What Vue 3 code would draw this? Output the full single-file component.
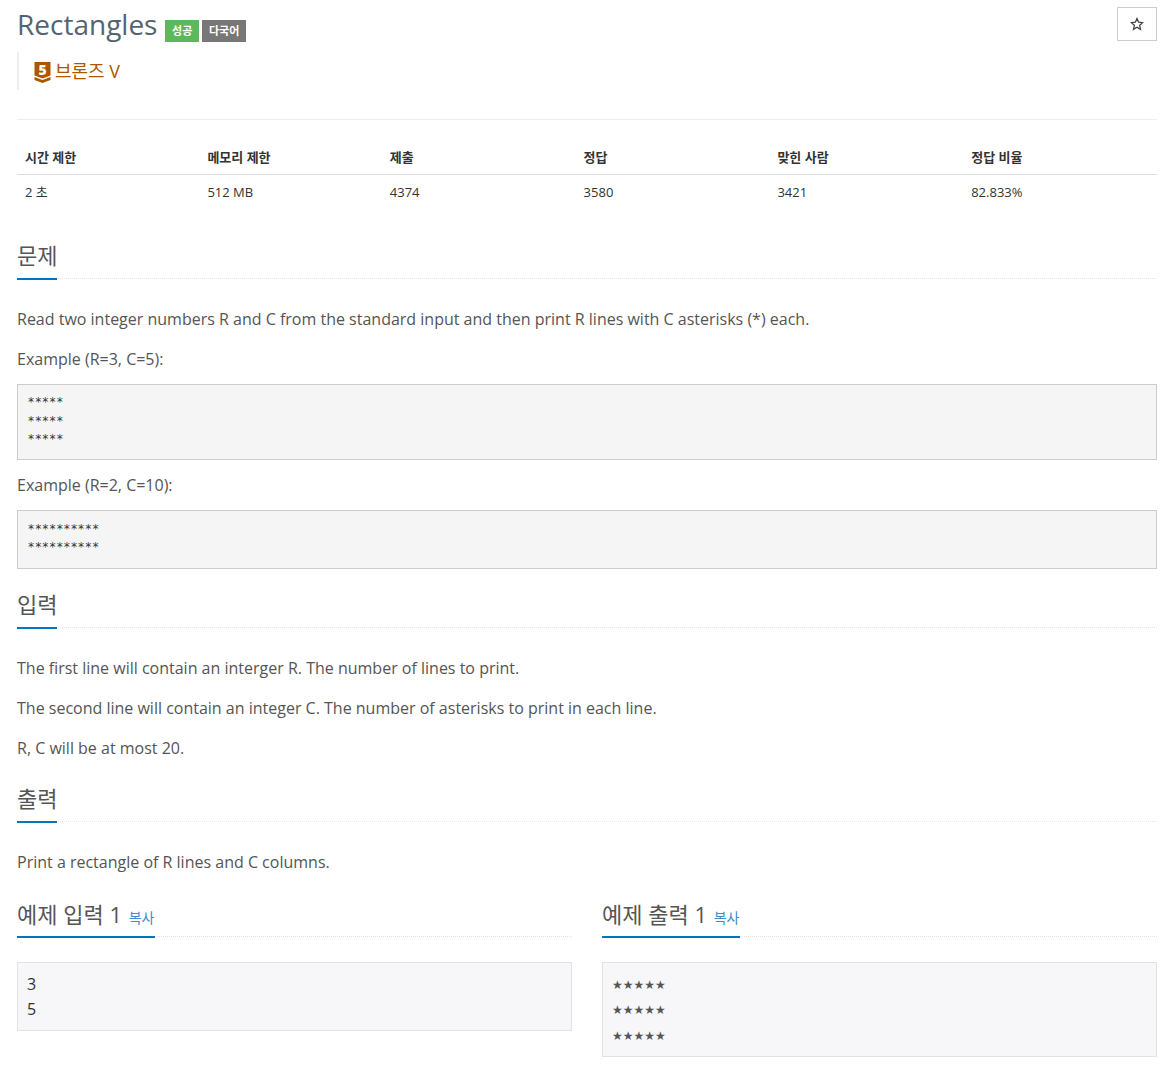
<script setup>
const stats = [
  { label: '시간 제한', value: '2 초', cls: 'narrow' },
  { label: '메모리 제한', value: '512 MB', cls: 'narrow' },
  { label: '제출', value: '4374', cls: 'wide' },
  { label: '정답', value: '3580', cls: 'wide' },
  { label: '맞힌 사람', value: '3421', cls: 'wide' },
  { label: '정답 비율', value: '82.833%', cls: 'wide' }
]
</script>

<template>
  <div class="page">
    <header class="title-row">
      <div class="title-left">
        <h1 class="title">Rectangles</h1>
        <span class="label green">성공</span>
        <span class="label gray">다국어</span>
      </div>
      <button class="star-btn" type="button" aria-label="star">
        <svg width="14" height="14" viewBox="0 0 24 24">
          <path d="M12 2.6l2.8 6.4 6.9.7-5.2 4.6 1.5 6.9-6-3.6-6 3.6 1.5-6.9-5.2-4.6 6.9-.7z" fill="none" stroke="#444" stroke-width="2.2" stroke-linejoin="miter" />
        </svg>
      </button>
    </header>

    <blockquote class="tier">
      <svg class="tier-icon" width="17" height="26" viewBox="0 -4 17 26">
        <path d="M0.5 0H16.5V13.5L8.5 16.5L0.5 13.5Z" fill="#ad5600" />
        <path d="M0.5 15L8.5 18L16.5 15V18L8.5 21L0.5 18Z" fill="#ad5600" />
        <text x="8.5" y="12.6" text-anchor="middle" class="tier-num">5</text>
      </svg>
      <span class="tier-name">브론즈 V</span>
    </blockquote>

    <div class="rule"></div>

    <table class="stats">
      <thead>
        <tr>
          <th v-for="s in stats" :key="s.label" :class="s.cls">{{ s.label }}</th>
        </tr>
      </thead>
      <tbody>
        <tr>
          <td v-for="s in stats" :key="s.label">{{ s.value }}</td>
        </tr>
      </tbody>
    </table>

    <section class="sec first">
      <div class="headline"><h2>문제</h2></div>
      <div class="body">
        <p>Read two integer numbers R and C from the standard input and then print R lines with C asterisks (*) each.</p>
        <p>Example (R=3, C=5):</p>
        <pre class="code">*****
*****
*****</pre>
        <p>Example (R=2, C=10):</p>
        <pre class="code">**********
**********</pre>
      </div>
    </section>

    <section class="sec">
      <div class="headline"><h2>입력</h2></div>
      <div class="body">
        <p>The first line will contain an interger R. The number of lines to print.</p>
        <p>The second line will contain an integer C. The number of asterisks to print in each line.</p>
        <p>R, C will be at most 20.</p>
      </div>
    </section>

    <section class="sec">
      <div class="headline"><h2>출력</h2></div>
      <div class="body">
        <p>Print a rectangle of R lines and C columns.</p>
      </div>
    </section>

    <div class="samples">
      <section>
        <div class="headline"><h2>예제 입력 1 <a class="copy">복사</a></h2></div>
        <pre class="sample">3
5</pre>
      </section>
      <section>
        <div class="headline"><h2>예제 출력 1 <a class="copy">복사</a></h2></div>
        <pre class="sample stars">★★★★★
★★★★★
★★★★★</pre>
      </section>
    </div>
  </div>
</template>

<style>
html, body { background: #fff; }
</style>

<style scoped>
.page {
  width: 1140px;
  padding: 0 19px 16px 17px;
  font-family: "Open Sans", "Noto Sans CJK KR", sans-serif;
  font-size: 14px;
  line-height: 1.42857;
  color: #555;
}
.title-row {
  display: flex;
  justify-content: space-between;
  align-items: flex-start;
  height: 52px;
}
.title-left { display: flex; align-items: flex-start; }
.title {
  margin: 4px 0 0;
  font-size: 28px;
  font-weight: 400;
  line-height: 40px;
  color: #55636f;
}
.label {
  margin-top: 20px;
  height: 22px;
  line-height: 22px;
  padding: 0 6.6px;
  font-size: 11px;
  font-weight: 700;
  color: #fff;
  text-align: center;
}
.green { margin-left: 8px; background: #5cb85c; }
.gray { margin-left: 3px; padding: 0 7px; background: #777; }
.star-btn {
  margin-top: 7px;
  width: 40px;
  height: 34px;
  padding: 0;
  border: 1px solid #ccc;
  background: #fff;
  display: flex;
  align-items: center;
  justify-content: center;
}
.tier {
  margin: 0;
  height: 38px;
  border-left: 2px solid #eee;
  padding-left: 15px;
  display: flex;
  align-items: center;
}
.tier-icon { margin-right: 4px; }
.tier-num { font-family: "Open Sans", sans-serif; font-size: 14px; font-weight: 800; fill: #fff; }
.tier-name { font-size: 18px; color: #ad5600; line-height: 25px; margin-top: 1px; }
.rule { margin-top: 29px; border-top: 1px solid #eee; }
.stats {
  width: 100%;
  margin-top: 19px;
  border-collapse: collapse;
  table-layout: fixed;
  font-size: 13px;
  color: #333;
}
.stats th {
  padding: 9px 8px 7px;
  height: 35px;
  box-sizing: border-box;
  text-align: left;
  font-weight: 700;
  border-bottom: 1px solid #ddd;
}
.stats td { padding: 8px; height: 35px; box-sizing: border-box; }
.narrow { width: 16%; }
.wide { width: 17%; }
.sec { margin-top: 20px; }
.sec.first { margin-top: 28px; }
.headline { border-bottom: 1px dotted #e4e4e4; height: 42px; box-sizing: border-box; }
.headline h2 {
  display: inline-block;
  margin: 0;
  height: 43px;
  box-sizing: border-box;
  font-size: 22px;
  font-weight: 400;
  line-height: 32px;
  padding-top: 2px;
  color: #555;
  border-bottom: 2px solid #0076c0;
  min-width: 40px;
}
.body { margin-top: 29px; }
.body p { margin: 0 0 17px; font-size: 16px; line-height: 23px; }
.code {
  margin: -4.4px 0 14px;
  padding: 8.5px 9.5px 10.5px;
  border: 1px solid #ccc;
  background: #f5f5f5;
  font-family: "DejaVu Sans Mono", monospace;
  font-size: 11.9px;
  line-height: 18.57px;
  color: #333;
}
.code:last-child { margin-bottom: -3px; padding-bottom: 11px; }
.samples {
  display: grid;
  grid-template-columns: 555px 555px;
  gap: 30px;
  margin-top: 21px;
}
.samples .headline h2 { line-height: 34px; padding-right: 1px; }
.copy { font-size: 14px; color: #428bca; margin-left: 1px; }
.sample {
  margin: 25px 0 0;
  padding: 9px 9px 7px;
  border: 1px solid #e1e1e8;
  background: #f7f7f9;
  font-family: "Open Sans", sans-serif;
  font-size: 16px;
  line-height: 25.6px;
  color: #333;
}
.stars { font-family: "DejaVu Sans", sans-serif; font-size: 12px; color: #555; padding: 10px 9px 6.2px; }
</style>
